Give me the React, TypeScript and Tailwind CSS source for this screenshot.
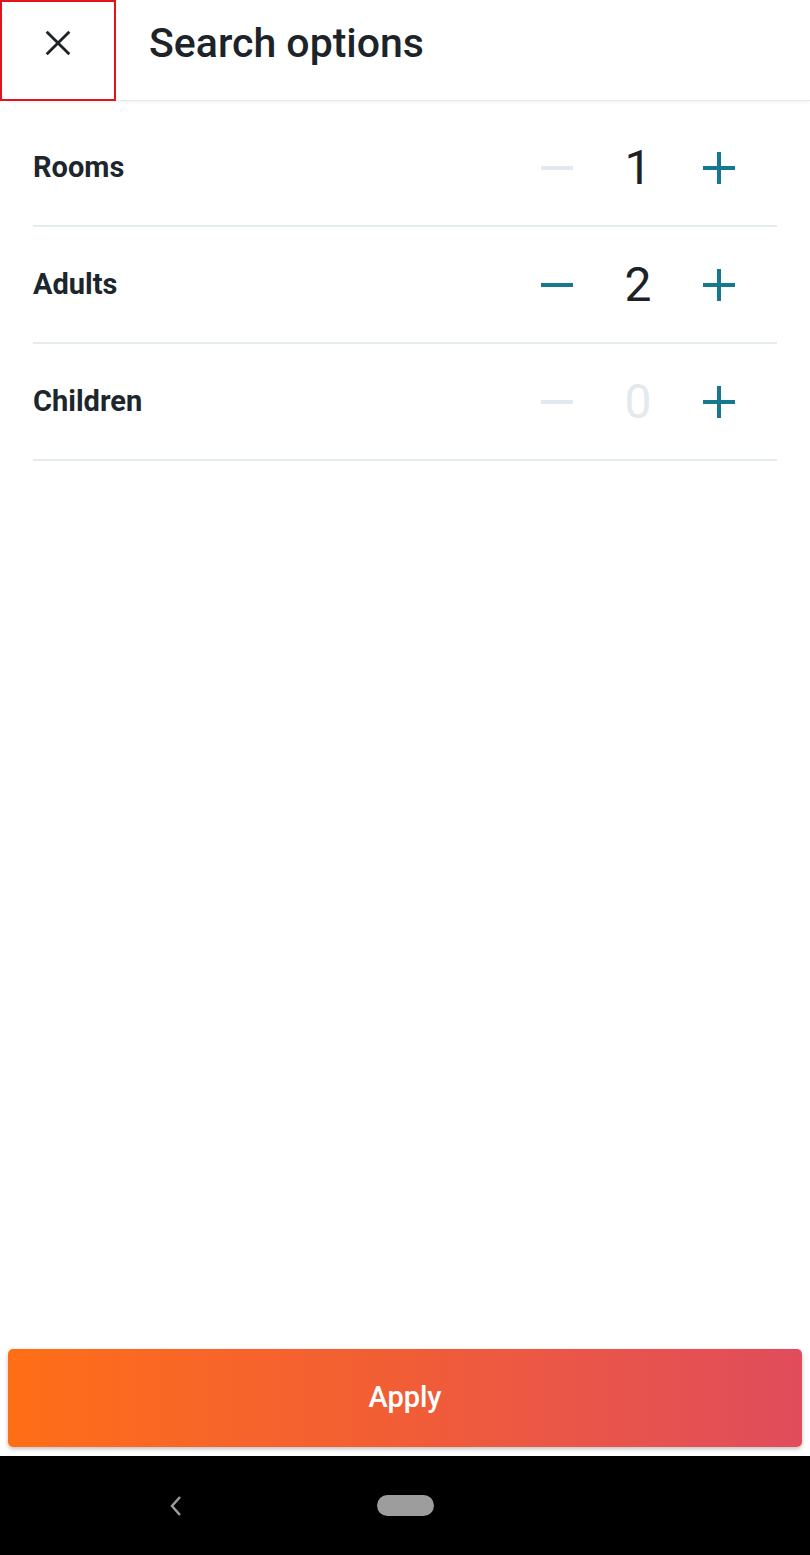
import { useState } from 'react';

const TEAL = 'text-[#16788f]';

function MinusIcon({ active }: { active: boolean }) {
  return (
    <svg width="34" height="34" viewBox="0 0 34 34" className={active ? TEAL : 'text-[#e2e9ee]'}>
      <line x1="1" y1="17" x2="33" y2="17" stroke="currentColor" strokeWidth="4" />
    </svg>
  );
}

function PlusIcon() {
  return (
    <svg width="34" height="34" viewBox="0 0 34 34" className={TEAL}>
      <line x1="1" y1="17" x2="33" y2="17" stroke="currentColor" strokeWidth="4" />
      <line x1="17" y1="1" x2="17" y2="33" stroke="currentColor" strokeWidth="4" />
    </svg>
  );
}

function Counter({ label, value, min, onChange }: { label: string; value: number; min: number; onChange: (v: number) => void }) {
  const canDec = value > min;
  return (
    <div className="h-[117px] flex items-center border-b-2 border-[#e5ecf0]">
      <span className="flex-1 text-[29px] font-bold text-[#1d262c]">{label}</span>
      <div className="flex items-center mr-[38px]">
        <button onClick={() => canDec && onChange(value - 1)} className="w-[40px] flex justify-center">
          <MinusIcon active={canDec} />
        </button>
        <span
          className={`w-[122px] text-center text-[48px] leading-none ${value === 0 ? 'text-[#e3eaef]' : 'text-[#1b2227]'}`}
        >
          {value}
        </span>
        <button onClick={() => onChange(value + 1)} className="w-[40px] flex justify-center">
          <PlusIcon />
        </button>
      </div>
    </div>
  );
}

export default function App() {
  const [rooms, setRooms] = useState(1);
  const [adults, setAdults] = useState(2);
  const [children, setChildren] = useState(0);

  return (
    <div className="h-[1555px] w-[810px] flex flex-col bg-white font-['Roboto',sans-serif]">
      {/* Header */}
      <div className="h-[101px] shrink-0 flex items-center border-b border-[#e6e9eb] shadow-[0_1px_3px_rgba(0,0,0,0.06)]">
        <button className="w-[116px] h-[101px] border-2 border-[#e0141c] flex items-center justify-center text-[#1d2429]">
          <svg width="34" height="34" viewBox="0 0 24 24" fill="none" stroke="currentColor" strokeWidth="2" className="-mt-[14px]">
            <line x1="4" y1="4" x2="20" y2="20" />
            <line x1="20" y1="4" x2="4" y2="20" />
          </svg>
        </button>
        <h1 className="ml-[33px] -mt-[12px] text-[41px] font-medium text-[#1d2429]">Search options</h1>
      </div>

      {/* Counters */}
      <div className="px-[33px] pt-[9px]">
        <Counter label="Rooms" value={rooms} min={1} onChange={setRooms} />
        <Counter label="Adults" value={adults} min={1} onChange={setAdults} />
        <Counter label="Children" value={children} min={0} onChange={setChildren} />
      </div>

      <div className="flex-1" />

      {/* Apply */}
      <div className="px-[8px] pb-[9px]">
        <button className="w-full h-[98px] rounded-[5px] bg-gradient-to-r from-[#ff6e14] via-[#f15d35] to-[#e04c5b] text-white text-[29px] font-medium shadow-[0_2px_4px_rgba(0,0,0,0.25)]">
          Apply
        </button>
      </div>

      {/* System nav */}
      <div className="h-[99px] shrink-0 bg-black flex items-center pl-[169px]">
        <svg width="14" height="24" viewBox="0 0 14 24" className="text-[#9b9b9b]">
          <polyline points="11,3 3,12 11,21" fill="none" stroke="currentColor" strokeWidth="2.5" />
        </svg>
        <div className="ml-[194px] w-[57px] h-[21px] rounded-full bg-[#9d9d9d]" />
      </div>
    </div>
  );
}
